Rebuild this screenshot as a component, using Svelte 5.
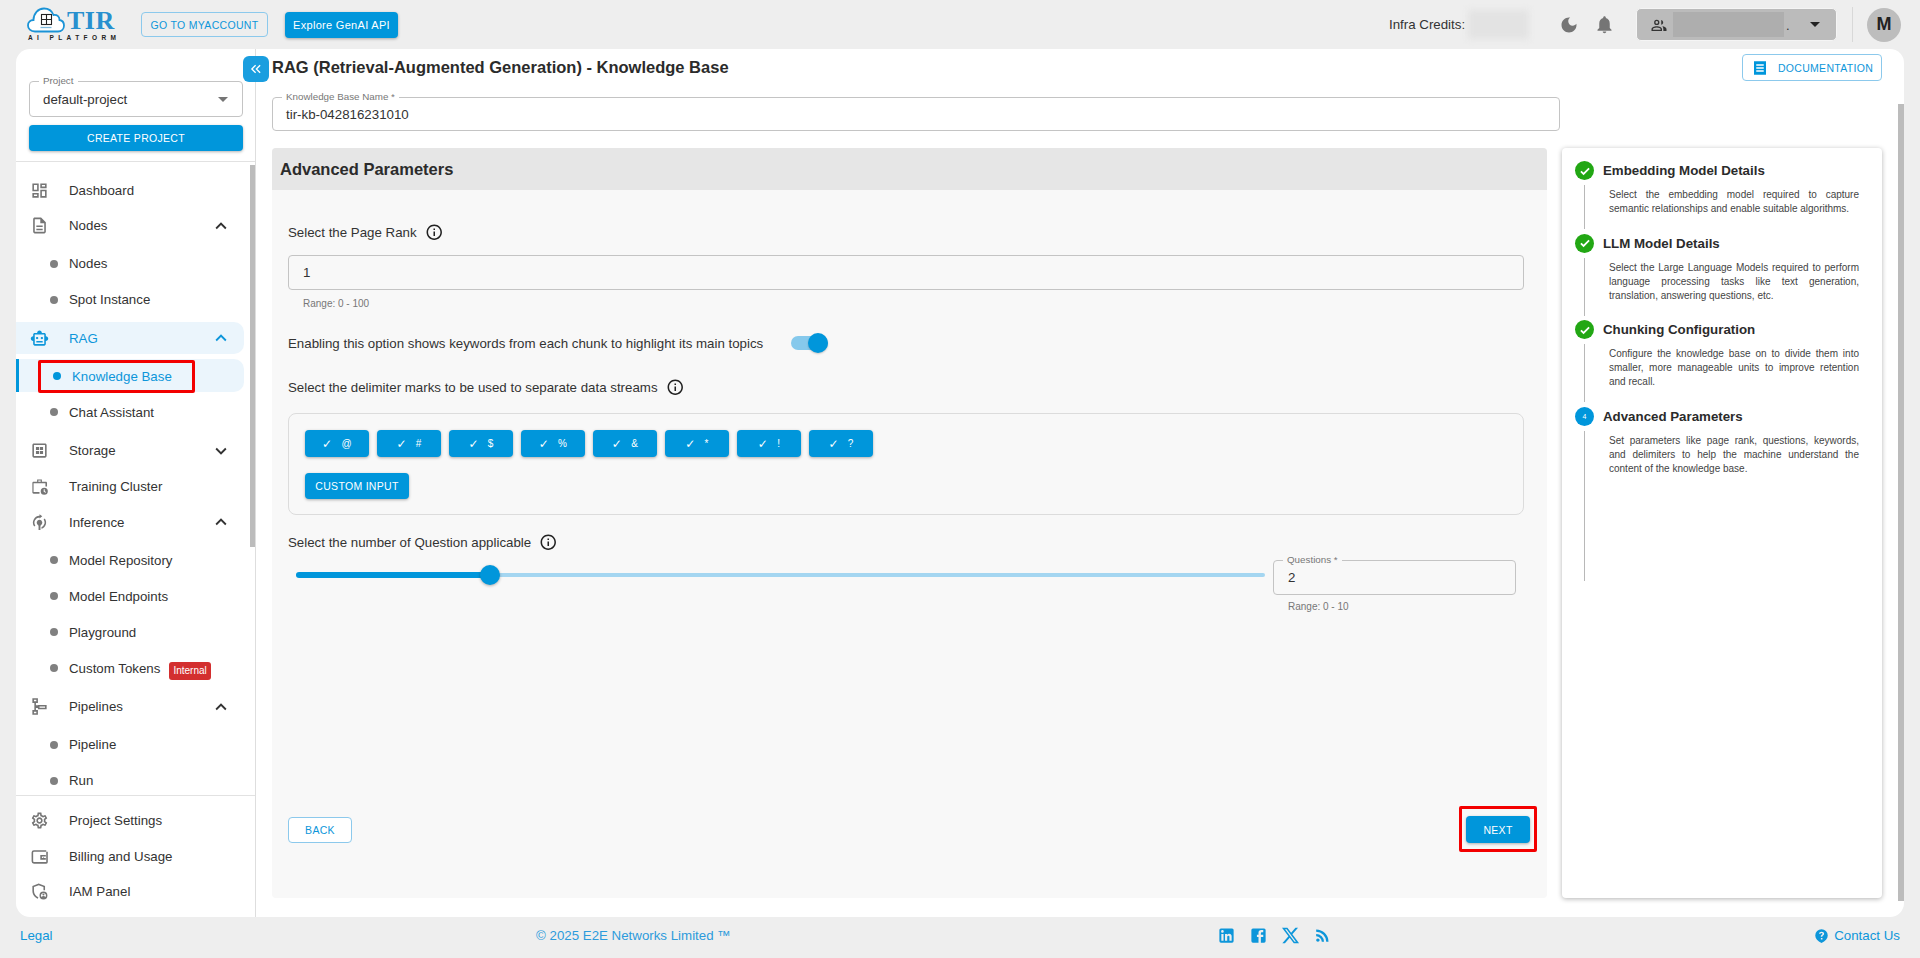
<script>
  const P = {
    dash: 'M19 5v2h-4V5h4M9 5v6H5V5h4m10 8v6h-4v-6h4M9 17v2H5v-2h4M21 3h-8v6h8V3zM11 3H3v10h8V3zm10 8h-8v10h8V11zm-10 4H3v6h8v-6z',
    doc: 'M8 16h8v2H8zm0-4h8v2H8zm6-10H6c-1.1 0-2 .9-2 2v16c0 1.1.89 2 1.99 2H18c1.1 0 2-.9 2-2V8l-6-6zm4 18H6V4h7v5h5v11z',
    bot: 'M20 9V7c0-1.1-.9-2-2-2h-3c0-1.66-1.34-3-3-3S9 3.34 9 5H6c-1.1 0-2 .9-2 2v2c-1.66 0-3 1.34-3 3s1.34 3 3 3v4c0 1.1.9 2 2 2h12c1.1 0 2-.9 2-2v-4c1.66 0 3-1.34 3-3s-1.34-3-3-3zm-2 10H6V7h12v12zm-9-6c-.83 0-1.5-.67-1.5-1.5S8.17 10 9 10s1.5.67 1.5 1.5S9.83 13 9 13zm7.5-1.5c0 .83-.67 1.5-1.5 1.5s-1.5-.67-1.5-1.5.67-1.5 1.5-1.5 1.5.67 1.5 1.5zM8 15h8v2H8v-2z',
    storage: 'M19 3H5c-1.1 0-2 .9-2 2v14c0 1.1.9 2 2 2h14c1.1 0 2-.9 2-2V5c0-1.1-.9-2-2-2zm0 16H5V5h14v14zM7.5 7.5h4v4h-4zm5 0h4v4h-4zm-5 5h4v4h-4zm5 0h4v4h-4z',
    train: 'M9 3h6v3h5c.8 0 1.5.7 1.5 1.5V12h-2V8h-15v11H12v2H4.500C3.700 21 3 20.300 3 19.500v-12C3 6.700 3.700 6 4.500 6H9zm1.500 1.500V6h3V4.500zM18 13.500a4.500 4.500 0 1 1 0 9 4.500 4.500 0 0 1 0-9zm-.7 2v3l2.400 1.300.6-1-1.700-.9v-2.400z',
    infer: 'M12 1.500l3.500 2.700L12 6.900V5.600a6.500 6.500 0 0 0-5.200 10.200l-1.400 1.400A8.500 8.500 0 0 1 12 3.600zM18.600 6.800A8.500 8.500 0 0 1 14.500 20v-2.100a6.500 6.500 0 0 0 2.700-9.700zM12 8.500a3.600 3.600 0 0 1 2 6.500l-.8 1v5.500h-2.400V16l-.8-1a3.600 3.600 0 0 1 2-6.500z',
    pipe: 'M3 1.500h7v6H7.500v3H10V10h11v5.500H10V14H7.500v2.500H10v6H3v-6h2.500v-9H3zm2 2v2h3v-2zm7 8.500v1.500h7V12zM5 18.500v2h3v-2z',
    gear: 'M19.43 12.98c.04-.32.07-.64.07-.98 0-.34-.03-.66-.07-.98l2.11-1.65c.19-.15.24-.42.12-.64l-2-3.46c-.09-.16-.26-.25-.44-.25-.06 0-.12.01-.17.03l-2.49 1c-.52-.4-1.08-.73-1.69-.98l-.38-2.65C14.46 2.18 14.25 2 14 2h-4c-.25 0-.46.18-.49.42l-.38 2.65c-.61.25-1.17.59-1.69.98l-2.49-1c-.06-.02-.12-.03-.18-.03-.17 0-.34.09-.43.25l-2 3.46c-.13.22-.07.49.12.64l2.11 1.65c-.04.32-.07.65-.07.98 0 .33.03.66.07.98l-2.11 1.65c-.19.15-.24.42-.12.64l2 3.46c.09.16.26.25.44.25.06 0 .12-.01.17-.03l2.49-1c.52.4 1.08.73 1.69.98l.38 2.65c.03.24.24.42.49.42h4c.25 0 .46-.18.49-.42l.38-2.65c.61-.25 1.17-.59 1.69-.98l2.49 1c.06.02.12.03.18.03.17 0 .34-.09.43-.25l2-3.46c.12-.22.07-.49-.12-.64l-2.11-1.65zm-1.98-1.71c.04.31.05.52.05.73 0 .21-.02.43-.05.73l-.14 1.13.89.7 1.08.84-.7 1.21-1.27-.51-1.04-.42-.9.68c-.43.32-.84.56-1.25.73l-1.06.43-.16 1.13-.2 1.35h-1.4l-.19-1.35-.16-1.13-1.06-.43c-.43-.18-.83-.41-1.23-.71l-.91-.7-1.06.43-1.27.51-.7-1.21 1.08-.84.89-.7-.14-1.13c-.03-.31-.05-.54-.05-.74s.02-.43.05-.73l.14-1.13-.89-.7-1.08-.84.7-1.21 1.27.51 1.04.42.9-.68c.43-.32.84-.56 1.25-.73l1.06-.43.16-1.13.2-1.35h1.39l.19 1.35.16 1.13 1.06.43c.43.18.83.41 1.23.71l.91.7 1.06-.43 1.27-.51.7 1.21-1.07.85-.89.7.14 1.13zM12 8c-2.21 0-4 1.79-4 4s1.79 4 4 4 4-1.79 4-4-1.79-4-4-4zm0 6c-1.1 0-2-.9-2-2s.9-2 2-2 2 .9 2 2-.9 2-2 2z',
    wallet: 'M5 4h15.500v2H5a1 1 0 0 0-1 1v11a1 1 0 0 0 1 1h15.500v-13h2v13a2 2 0 0 1-2 2H5a3 3 0 0 1-3-3V7a3 3 0 0 1 3-3zm8 6h7v2h-5v2h5v2h-7zm3.500 2.500h1v1h-1z',
    shield: 'M11 2l8 3v5.500h-2V6.400l-6-2.200-6 2.200V11c0 3.800 2.400 7 5.500 8.300l-.5 1.900C6.100 19.700 3 15.800 3 11V5zm6 10a5 5 0 1 1 0 10 5 5 0 0 1 0-10zm0 1.800a3.200 3.200 0 0 0-2.400 5.300c.5-.9 1.400-1.300 2.400-1.300s1.900.4 2.400 1.300a3.200 3.200 0 0 0-2.400-5.300zm0 .7a1.300 1.300 0 1 1 0 2.600 1.300 1.300 0 0 1 0-2.600z',
    info: 'M11 7h2v2h-2zm0 4h2v6h-2zm1-9C6.480 2 2 6.480 2 12s4.480 10 10 10 10-4.480 10-10S17.520 2 12 2zm0 18c-4.410 0-8-3.590-8-8s3.590-8 8-8 8 3.590 8 8-3.590 8-8 8z'
  }
  const up = 'M12 8l-6 6 1.410 1.410L12 10.830l4.590 4.580L18 14z'
  const down = 'M16.590 8.590L12 13.170 7.410 8.590 6 10l6 6 6-6z'

  const nav = [
    { label: 'Dashboard', icon: P.dash },
    { label: 'Nodes', icon: P.doc, open: true, subs: ['Nodes', 'Spot Instance'] },
    { label: 'RAG', icon: P.bot, open: true, active: true, subs: ['Knowledge Base', 'Chat Assistant'] },
    { label: 'Storage', icon: P.storage, open: false },
    { label: 'Training Cluster', icon: P.train },
    { label: 'Inference', icon: P.infer, open: true, subs: ['Model Repository', 'Model Endpoints', 'Playground', 'Custom Tokens'] },
    { label: 'Pipelines', icon: P.pipe, open: true, subs: ['Pipeline', 'Run'] }
  ]
  const bottomNav = [
    { label: 'Project Settings', icon: P.gear },
    { label: 'Billing and Usage', icon: P.wallet },
    { label: 'IAM Panel', icon: P.shield }
  ]
  const delimiters = ['@', '#', '$', '%', '&', '*', '!', '?']
  const steps = [
    { title: 'Embedding Model Details', text: 'Select the embedding model required to capture semantic relationships and enable suitable algorithms.', done: true },
    { title: 'LLM Model Details', text: 'Select the Large Language Models required to perform language processing tasks like text generation, translation, answering questions, etc.', done: true },
    { title: 'Chunking Configuration', text: 'Configure the knowledge base on to divide them into smaller, more manageable units to improve retention and recall.', done: true },
    { title: 'Advanced Parameters', text: 'Set parameters like page rank, questions, keywords, and delimiters to help the machine understand the content of the knowledge base.', done: false }
  ]
</script>

<div class="page">
  <header class="top">
    <div class="logo">
      <svg class="cloud" viewBox="0 0 38 26" width="38" height="26">
        <path d="M8 24.500 C3.500 24.500 1 21.500 1 18.500 C1 15 3.500 13 6.500 13 C6.500 6.500 11 1.500 17 1.500 C21.500 1.500 25 4 26.500 8 C30.500 7.500 32.500 10 32.500 13 C35 13.500 37 15.500 37 18.500 C37 22 34.500 24.500 31 24.500 Z" fill="#fff" stroke="#1b93d6" stroke-width="1.800"/>
        <rect x="14.500" y="7.500" width="10" height="10" fill="none" stroke="#222" stroke-width="1.100"/>
        <path d="M19.500 7.500v10M14.500 12.500h10" stroke="#222" stroke-width="1.100"/>
        <path d="M13.500 20.500h11" stroke="#7fb9dc" stroke-width="1.300"/>
      </svg>
      <span class="tir">TIR</span>
      <span class="plat">AI PLATFORM</span>
    </div>
    <button class="btn outline myaccount">GO TO MYACCOUNT</button>
    <button class="btn solid genai">Explore GenAI API</button>
    <span class="credits">Infra Credits:</span>
    <div class="blurred"></div>
    <svg class="ic moon" viewBox="0 0 24 24"><path d="M12 3c-4.970 0-9 4.030-9 9s4.030 9 9 9 9-4.030 9-9c0-.460-.040-.920-.100-1.360-.980 1.370-2.580 2.260-4.400 2.260-2.980 0-5.400-2.420-5.400-5.400 0-1.810.890-3.420 2.260-4.400-.440-.060-.900-.100-1.360-.100z"/></svg>
    <svg class="ic bell" viewBox="0 0 24 24"><path d="M12 22c1.100 0 2-.900 2-2h-4c0 1.100.890 2 2 2zm6-6v-5c0-3.070-1.640-5.640-4.500-6.320V4c0-.830-.670-1.500-1.500-1.500s-1.500.670-1.500 1.500v.680C7.630 5.360 6 7.920 6 11v5l-2 2v1h16v-1l-2-2z"/></svg>
    <div class="team">
      <svg class="team-ic" viewBox="0 0 24 24"><path d="M9 5a3.500 3.500 0 1 1 0 7 3.500 3.500 0 0 1 0-7zm0 1.800a1.700 1.700 0 1 0 0 3.400 1.700 1.700 0 0 0 0-3.400zM15 5.200c1.500.4 2.600 1.800 2.600 3.300s-1.100 2.900-2.600 3.300zM9 13.500c3.500 0 7 1.600 7 4V20H2v-2.500c0-2.400 3.500-4 7-4zm0 1.800c-2.700 0-5.200 1.100-5.200 2.200v.7h10.400v-.7c0-1.100-2.500-2.200-5.200-2.200zM16.500 13.700c2.800.4 5.500 1.700 5.500 3.800V20h-4.200v-2.500c0-1.500-.5-2.800-1.300-3.800z"/></svg>
      <div class="team-name"></div>
      <span class="team-dot">.</span>
      <span class="caret dark"></span>
    </div>
    <div class="vline"></div>
    <div class="avatar">M</div>
  </header>

  <div class="card">
    <aside class="side">
      <div class="project">
        <div class="field proj-field">
          <span class="legend">Project</span>
          <span class="proj-val">default-project</span>
          <span class="caret"></span>
        </div>
        <button class="btn solid create">CREATE PROJECT</button>
      </div>
      <nav class="nav">
        {#each nav as item}
          <div class="row" class:active={item.active}>
            <svg class="ic nav-ic" viewBox="0 0 24 24"><path d={item.icon}/></svg>
            <span class="row-label">{item.label}</span>
            {#if item.open !== undefined}
              <svg class="ic chev" viewBox="0 0 24 24"><path d={item.open ? up : down}/></svg>
            {/if}
          </div>
          {#if item.subs}
            <div class="subs">
              {#each item.subs as sub}
                <div class="sub" class:current={sub === 'Knowledge Base'}>
                  <span class="dot"></span>
                  <span>{sub}</span>
                  {#if sub === 'Custom Tokens'}<span class="badge">Internal</span>{/if}
                  {#if sub === 'Knowledge Base'}<span class="redbox side-red"></span>{/if}
                </div>
              {/each}
            </div>
          {/if}
        {/each}
      </nav>
      <div class="side-bottom">
        {#each bottomNav as item}
          <div class="row">
            <svg class="ic nav-ic" viewBox="0 0 24 24"><path d={item.icon}/></svg>
            <span class="row-label">{item.label}</span>
          </div>
        {/each}
      </div>
      <div class="thumb side-thumb"></div>
    </aside>

    <main class="main">
      <button class="collapse" aria-label="collapse">
        <svg viewBox="0 0 24 24" width="18" height="18"><path d="M11.500 7l-5 5 5 5M17.500 7l-5 5 5 5" fill="none" stroke="#fff" stroke-width="1.800"/></svg>
      </button>
      <div class="title-row">
        <h1>RAG (Retrieval-Augmented Generation) - Knowledge Base</h1>
        <button class="btn outline docs">
          <svg viewBox="0 0 24 24" width="18" height="18"><path d="M4 3h16v18H4z" fill="#0096db"/><path d="M7 8h10M7 12h10M7 16h10" stroke="#fff" stroke-width="2"/></svg>
          DOCUMENTATION
        </button>
      </div>

      <div class="field kb-field">
        <span class="legend">Knowledge Base Name *</span>
        <span class="kb-val">tir-kb-042816231010</span>
      </div>

      <div class="columns">
        <section class="panel">
          <div class="panel-head">Advanced Parameters</div>
          <div class="panel-body">
            <div class="label">
              Select the Page Rank
              <svg class="info" viewBox="0 0 24 24"><path d={P.info}/></svg>
            </div>
            <div class="input rank">1</div>
            <div class="hint">Range: 0 - 100</div>

            <div class="label toggle-row">
              Enabling this option shows keywords from each chunk to highlight its main topics
              <span class="toggle"><span class="toggle-thumb"></span></span>
            </div>

            <div class="label delim-label">
              Select the delimiter marks to be used to separate data streams
              <svg class="info" viewBox="0 0 24 24"><path d={P.info}/></svg>
            </div>
            <div class="delim-box">
              <div class="chips">
                {#each delimiters as d}
                  <button class="btn solid chip"><span class="tick">✓</span>{d}</button>
                {/each}
              </div>
              <button class="btn solid custom">CUSTOM INPUT</button>
            </div>

            <div class="label q-label">
              Select the number of Question applicable
              <svg class="info" viewBox="0 0 24 24"><path d={P.info}/></svg>
            </div>
            <div class="q-row">
              <div class="slider">
                <div class="rail"></div>
                <div class="fill" style="width: {(2 / 10) * 100}%"></div>
                <div class="knob" style="left: {(2 / 10) * 100}%"></div>
              </div>
              <div class="q-wrap">
                <div class="input q-input">
                  <span class="legend">Questions *</span>
                  2
                </div>
                <div class="hint q-hint">Range: 0 - 10</div>
              </div>
            </div>

            <div class="actions">
              <button class="btn outline back">BACK</button>
              <div class="next-wrap">
                <button class="btn solid next">NEXT</button>
                <span class="redbox next-red"></span>
              </div>
            </div>
          </div>
        </section>

        <section class="stepper">
          {#each steps as step, i}
            <div class="step-head">
              <span class="circle" class:done={step.done}>
                {#if step.done}
                  <svg viewBox="0 0 24 24" width="14" height="14"><path d="M5 12.500l4.500 4.500L19 7.500" fill="none" stroke="#fff" stroke-width="3"/></svg>
                {:else}
                  {i + 1}
                {/if}
              </span>
              <span class="step-title">{step.title}</span>
            </div>
            <div class="step-body" class:last={i === steps.length - 1}>
              <p>{step.text}</p>
            </div>
          {/each}
        </section>
      </div>
      <div class="thumb main-thumb"></div>
    </main>
  </div>

  <footer class="foot">
    <a class="legal" href="#top">Legal</a>
    <span class="copy">© 2025 E2E Networks Limited ™</span>
    <div class="social">
      <svg viewBox="0 0 24 24" width="19" height="19"><path d="M19 3a2 2 0 0 1 2 2v14a2 2 0 0 1-2 2H5a2 2 0 0 1-2-2V5a2 2 0 0 1 2-2h14m-.5 15.500v-5.300a3.260 3.260 0 0 0-3.260-3.260c-.850 0-1.840.520-2.320 1.300v-1.110h-2.790v8.370h2.790v-4.930c0-.770.620-1.400 1.390-1.400a1.400 1.400 0 0 1 1.400 1.400v4.930h2.790M6.880 8.560a1.680 1.680 0 0 0 1.680-1.680c0-.930-.750-1.690-1.680-1.690a1.690 1.690 0 0 0-1.690 1.690c0 .930.760 1.680 1.690 1.680m1.390 9.940v-8.370H5.500v8.370h2.770z"/></svg>
      <svg viewBox="0 0 24 24" width="19" height="19"><path d="M5 3h14a2 2 0 0 1 2 2v14a2 2 0 0 1-2 2H5a2 2 0 0 1-2-2V5a2 2 0 0 1 2-2m13 2h-2.500A3.500 3.500 0 0 0 12 8.500V11h-2v3h2v7h3v-7h3v-3h-3V9a1 1 0 0 1 1-1h2V5z"/></svg>
      <svg viewBox="0 0 24 24" width="19" height="19"><path d="M18.244 2.250h3.308l-7.227 8.260 8.502 11.240H16.170l-5.214-6.817L4.990 21.750H1.680l7.730-8.835L1.254 2.250H8.080l4.713 6.231zm-1.161 17.520h1.833L7.084 4.126H5.117z"/></svg>
      <svg viewBox="0 0 24 24" width="19" height="19"><path d="M6.180 15.640a2.180 2.180 0 0 1 2.180 2.180C8.360 19 7.380 20 6.180 20 5 20 4 19 4 17.820a2.180 2.180 0 0 1 2.180-2.180M4 4.440A15.560 15.560 0 0 1 19.560 20h-2.830A12.730 12.730 0 0 0 4 7.270V4.440m0 5.660a9.900 9.900 0 0 1 9.900 9.900h-2.830A7.070 7.070 0 0 0 4 12.930V10.100z"/></svg>
    </div>
    <div class="contact">
      <svg viewBox="0 0 24 24" width="15" height="18"><path d="M12 1a10 10 0 0 1 10 10c0 5-4 9-10 12C6 20 2 16 2 11A10 10 0 0 1 12 1zm-1 14v2.500h2.500V15zm1.200-10c-2.400 0-4 1.400-4.200 3.500h2.400c.1-.8.700-1.300 1.700-1.300s1.500.5 1.500 1.200c0 .7-.4 1.100-1.200 1.700-1.200.9-1.500 1.600-1.500 3.200h2.400c0-1 .2-1.400 1.100-2 1.100-.8 1.800-1.700 1.800-3C16.200 6.300 14.600 5 12.200 5z"/></svg>
      Contact Us
    </div>
  </footer>
</div>

<style>
  :global(body) {
    margin: 0;
    background: #eeeeee;
    font-family: "Liberation Sans", Arial, sans-serif;
    color: #333;
  }

  .page {
    height: 958px;
    width: 1920px;
    display: flex;
    flex-direction: column;
    overflow: hidden;
  }

  button {
    font-family: inherit;
  }

  .ic {
    fill: #757575;
    flex: none;
  }

  /* top bar */
  .top {
    height: 49px;
    flex: none;
    display: flex;
    align-items: center;
    padding-left: 27px;
  }

  .logo {
    display: grid;
    grid-template-columns: 40px 48px;
    grid-template-rows: 27px 7px;
    width: 88px;
    height: 34px;
    margin-top: -1px;
  }

  .cloud {
    grid-row: 1;
    grid-column: 1;
  }

  .tir {
    font-family: "Liberation Serif", serif;
    font-weight: 700;
    font-size: 26px;
    line-height: 28px;
    color: #2890cf;
    letter-spacing: 0.5px;
  }

  .plat {
    grid-column: 1 / 3;
    font-weight: 700;
    font-size: 6.5px;
    letter-spacing: 4.4px;
    line-height: 7px;
    color: #222;
    white-space: nowrap;
    margin-left: 1px;
  }

  .btn {
    border-radius: 4px;
    font-size: 10.5px;
    box-sizing: border-box;
    white-space: nowrap;
    padding: 0;
    letter-spacing: 0.3px;
  }

  .solid {
    background: #0096db;
    color: #fff;
    border: none;
    box-shadow: 0 1px 3px rgba(0, 0, 0, 0.3);
  }

  .outline {
    background: transparent;
    color: #0d96da;
    border: 1px solid #8cc9ec;
  }

  .myaccount {
    width: 127px;
    height: 25px;
    margin-left: 26px;
  }

  .genai {
    width: 113px;
    height: 26px;
    margin-left: 17px;
    font-size: 11px;
  }

  .credits {
    margin-left: 991px;
    font-size: 13.3px;
    width: 79px;
    white-space: nowrap;
  }

  .blurred {
    width: 61px;
    height: 29px;
    background: #e3e3e3;
    filter: blur(3px);
  }

  .moon {
    width: 20px;
    height: 20px;
    margin-left: 30px;
  }

  .bell {
    width: 21px;
    height: 21px;
    margin-left: 15px;
  }

  .team {
    width: 201px;
    height: 33px;
    margin-left: 21px;
    box-sizing: border-box;
    background: #bbbbbb;
    border: 1px solid #f5f5f5;
    border-radius: 5px;
    display: flex;
    align-items: center;
    padding-left: 13px;
  }

  .team-ic {
    width: 18px;
    height: 18px;
    fill: #333;
    flex: none;
  }

  .team-name {
    width: 111px;
    height: 25px;
    background: #aeaeae;
    margin-left: 5px;
  }

  .team-dot {
    font-size: 13px;
    margin-left: 2px;
    margin-top: 2px;
  }

  .caret {
    width: 0;
    height: 0;
    border-left: 5px solid transparent;
    border-right: 5px solid transparent;
    border-top: 5px solid #757575;
  }

  .caret.dark {
    border-top-color: #222;
    margin-left: 20px;
  }

  .vline {
    width: 1px;
    height: 35px;
    background: #d8d8d8;
    margin-left: 15px;
  }

  .avatar {
    width: 34px;
    height: 34px;
    border-radius: 50%;
    background: #bdbdbd;
    margin-left: 14px;
    display: flex;
    align-items: center;
    justify-content: center;
    font-size: 18px;
    font-weight: 700;
    color: #222;
  }

  /* card */
  .card {
    height: 868px;
    flex: none;
    margin: 0 16px;
    background: #fff;
    border-radius: 14px;
    display: flex;
    overflow: hidden;
  }

  .side {
    width: 240px;
    flex: none;
    box-sizing: border-box;
    border-right: 1px solid #dedede;
    display: flex;
    flex-direction: column;
    position: relative;
  }

  .project {
    height: 113px;
    flex: none;
    box-sizing: border-box;
    padding: 32px 12px 0 13px;
    border-bottom: 1px solid #e2e2e2;
  }

  .field {
    box-sizing: border-box;
    border: 1px solid #c4c4c4;
    border-radius: 4px;
    position: relative;
    display: flex;
    align-items: center;
    background: #fff;
  }

  .legend {
    position: absolute;
    top: -7px;
    left: 9px;
    font-size: 9.8px;
    line-height: 12px;
    padding: 0 4px;
    color: #777;
    background: #fff;
    white-space: nowrap;
  }

  .proj-field {
    height: 36px;
    padding-left: 13px;
    font-size: 13.3px;
    justify-content: space-between;
    padding-right: 14px;
  }

  .create {
    display: block;
    width: 100%;
    height: 26px;
    margin-top: 8px;
  }

  .nav {
    height: 634px;
    flex: none;
    overflow: hidden;
    padding-top: 12px;
    box-sizing: border-box;
    border-bottom: 1px solid #e2e2e2;
  }

  .row {
    height: 32px;
    margin-bottom: 3.7px;
    margin-right: 11px;
    display: flex;
    align-items: center;
    font-size: 13.3px;
    border-radius: 0 10px 10px 0;
    position: relative;
  }

  .row.active {
    background: #ebf5fc;
    color: #0d96da;
  }

  .row.active .ic {
    fill: #0d96da;
  }

  .nav-ic {
    width: 19px;
    height: 19px;
    margin-left: 14px;
  }

  .row-label {
    margin-left: 20px;
  }

  .chev {
    width: 22px;
    height: 22px;
    position: absolute;
    left: 194px;
    fill: #333;
  }

  .subs {
    margin: 4px 0 4.5px;
  }

  .sub {
    height: 36px;
    margin-right: 11px;
    display: flex;
    align-items: center;
    font-size: 13.3px;
    position: relative;
    padding-left: 34px;
    white-space: nowrap;
  }

  .dot {
    width: 8px;
    height: 8px;
    border-radius: 50%;
    background: #808080;
    margin-right: 11px;
    flex: none;
  }

  .sub.current {
    color: #0d96da;
    padding-left: 37px;
  }

  .sub.current::before {
    content: "";
    position: absolute;
    inset: 1px 0 2px 0;
    background: #ebf5fc;
    border-left: 3px solid #0096db;
    border-radius: 0 10px 10px 0;
  }

  .sub.current > * {
    position: relative;
  }

  .sub.current .dot {
    background: #0096db;
  }

  .sub .side-red {
    position: absolute;
    left: 22px;
    top: 2px;
    width: 157px;
    height: 33px;
  }

  .redbox {
    box-sizing: border-box;
    border: 3px solid #f30000;
    border-radius: 2px;
  }

  .badge {
    background: #d32f2f;
    color: #fff;
    font-size: 10px;
    border-radius: 3px;
    padding: 3px 4px;
    line-height: 12px;
    margin-left: 9px;
    margin-top: 6px;
  }

  .side-bottom {
    padding-top: 8.5px;
  }

  .thumb {
    position: absolute;
    background: #bcbcbc;
  }

  .side-thumb {
    right: 0;
    top: 116px;
    width: 5px;
    height: 382px;
  }

  /* main */
  .main {
    flex: 1;
    position: relative;
    padding: 5px 22px 0 16px;
    min-width: 0;
  }

  .collapse {
    position: absolute;
    left: -13px;
    top: 7px;
    width: 26px;
    height: 26px;
    border: none;
    border-radius: 6px;
    background: #1a9edf;
    padding: 0;
    display: flex;
    align-items: center;
    justify-content: center;
    z-index: 2;
  }

  .title-row {
    height: 27px;
    display: flex;
    align-items: center;
    justify-content: space-between;
  }

  h1 {
    margin: 0;
    font-size: 16.5px;
    font-weight: 700;
    color: #2b2b2b;
  }

  .docs {
    width: 140px;
    height: 27px;
    display: flex;
    align-items: center;
    justify-content: center;
    gap: 9px;
  }

  .kb-field {
    margin-top: 16px;
    width: 1288px;
    height: 34px;
    padding-left: 13px;
    font-size: 13.3px;
  }

  .columns {
    display: flex;
    gap: 15px;
    margin-top: 17px;
  }

  .panel {
    width: 1275px;
    height: 750px;
    background: #f8f8f8;
    border-radius: 4px;
    display: flex;
    flex-direction: column;
    overflow: hidden;
  }

  .panel-head {
    height: 42px;
    flex: none;
    background: #e6e6e6;
    display: flex;
    align-items: center;
    padding-left: 8px;
    font-size: 16.5px;
    font-weight: 700;
    color: #2b2b2b;
  }

  .panel-body {
    flex: 1;
    padding: 32px 23px 55px 16px;
    display: flex;
    flex-direction: column;
    min-height: 0;
  }

  .label {
    height: 20px;
    display: flex;
    align-items: center;
    font-size: 13.3px;
    flex: none;
    white-space: nowrap;
  }

  .info {
    width: 18.5px;
    height: 18.5px;
    margin-left: 8px;
    fill: #222;
  }

  .input {
    box-sizing: border-box;
    border: 1px solid #c4c4c4;
    border-radius: 4px;
    height: 35px;
    display: flex;
    align-items: center;
    padding-left: 14px;
    font-size: 13.3px;
    flex: none;
    position: relative;
  }

  .rank {
    margin-top: 13px;
  }

  .hint {
    font-size: 10px;
    line-height: 14px;
    color: #777;
    margin-top: 7px;
    padding-left: 15px;
  }

  .toggle-row {
    margin-top: 22px;
  }

  .toggle {
    width: 37px;
    height: 20px;
    margin-left: 28px;
    position: relative;
    flex: none;
  }

  .toggle::before {
    content: "";
    position: absolute;
    left: 0;
    right: 0;
    top: 3px;
    height: 14px;
    border-radius: 7px;
    background: #86c9ec;
  }

  .toggle-thumb {
    position: absolute;
    right: 0;
    top: 0;
    width: 20px;
    height: 20px;
    border-radius: 50%;
    background: #0096db;
    box-shadow: 0 1px 2px rgba(0, 0, 0, 0.2);
  }

  .delim-label {
    margin-top: 24px;
  }

  .delim-box {
    margin-top: 16px;
    height: 102px;
    flex: none;
    box-sizing: border-box;
    border: 1px solid #dcdcdc;
    border-radius: 8px;
    padding: 16px;
  }

  .chips {
    display: flex;
    gap: 8px;
  }

  .chip {
    width: 64px;
    height: 27px;
    font-size: 10px;
    display: flex;
    align-items: center;
    justify-content: center;
    gap: 9px;
  }

  .tick {
    font-family: "DejaVu Sans", sans-serif;
    font-size: 12px;
    font-weight: 700;
  }

  .custom {
    display: block;
    width: 104px;
    height: 26px;
    margin-top: 16px;
  }

  .q-label {
    margin-top: 17px;
  }

  .q-row {
    display: flex;
    gap: 8px;
    margin-top: 8px;
    padding: 0 8px;
  }

  .slider {
    flex: 1;
    height: 30px;
    position: relative;
  }

  .rail {
    position: absolute;
    left: 0;
    right: 0;
    top: 13px;
    height: 4px;
    border-radius: 2px;
    background: #a4d6f1;
  }

  .fill {
    position: absolute;
    left: 0;
    top: 12px;
    height: 6px;
    border-radius: 3px;
    background: #0096db;
  }

  .knob {
    position: absolute;
    top: 5px;
    width: 20px;
    height: 20px;
    margin-left: -10px;
    border-radius: 50%;
    background: #0096db;
    box-shadow: 0 1px 3px rgba(0, 0, 0, 0.3);
  }

  .q-wrap {
    width: 243px;
    flex: none;
  }

  .q-input .legend {
    background: #f8f8f8;
  }

  .q-hint {
    margin-top: 5px;
  }

  .actions {
    margin-top: auto;
    margin-right: -6px;
    display: flex;
    align-items: center;
    justify-content: space-between;
  }

  .back {
    width: 64px;
    height: 26px;
    font-size: 10.5px;
    background: #fff;
  }

  .next-wrap {
    position: relative;
    display: flex;
  }

  .next {
    width: 64px;
    height: 27px;
    font-size: 10.5px;
  }

  .next-red {
    position: absolute;
    inset: -10px -7px -9px -7px;
  }

  /* stepper */
  .stepper {
    width: 320px;
    height: 750px;
    box-sizing: border-box;
    background: #fff;
    border-radius: 4px;
    box-shadow: 0 1px 5px rgba(0, 0, 0, 0.3);
    padding: 13px 23px 0 13px;
  }

  .step-head {
    display: flex;
    align-items: center;
    height: 19px;
  }

  .circle {
    width: 19px;
    height: 19px;
    border-radius: 50%;
    background: #0096db;
    color: #fff;
    font-size: 7px;
    display: flex;
    align-items: center;
    justify-content: center;
    flex: none;
  }

  .circle.done {
    background: #22a714;
  }

  .step-title {
    margin-left: 9px;
    font-size: 13.3px;
    font-weight: 700;
    color: #2b2b2b;
    white-space: nowrap;
  }

  .step-body {
    margin: 5px 0 4.5px 9px;
    border-left: 1px solid #b8b8b8;
    padding: 3px 0 13px 24px;
  }

  .step-body.last {
    height: 150px;
    box-sizing: border-box;
  }

  .step-body p {
    margin: 0;
    font-size: 10px;
    line-height: 14px;
    text-align: justify;
    color: #444;
  }

  .main-thumb {
    right: 0;
    top: 55px;
    width: 6px;
    height: 797px;
  }

  /* footer */
  .foot {
    height: 41px;
    flex: none;
    box-sizing: border-box;
    padding: 0 20px 4px;
    display: flex;
    align-items: center;
    font-size: 13.3px;
    color: #0d96da;
  }

  .legal {
    color: #0d96da;
    text-decoration: none;
    width: 516px;
  }

  .copy {
    width: 229px;
    white-space: nowrap;
    color: #2c9bdc;
  }

  .social {
    margin-left: 452px;
    display: flex;
    align-items: center;
    gap: 13px;
  }

  .social svg {
    fill: #0d96da;
  }

  .contact {
    margin-left: auto;
    display: flex;
    align-items: center;
    gap: 5px;
  }

  .contact svg {
    fill: #0d96da;
  }
</style>
